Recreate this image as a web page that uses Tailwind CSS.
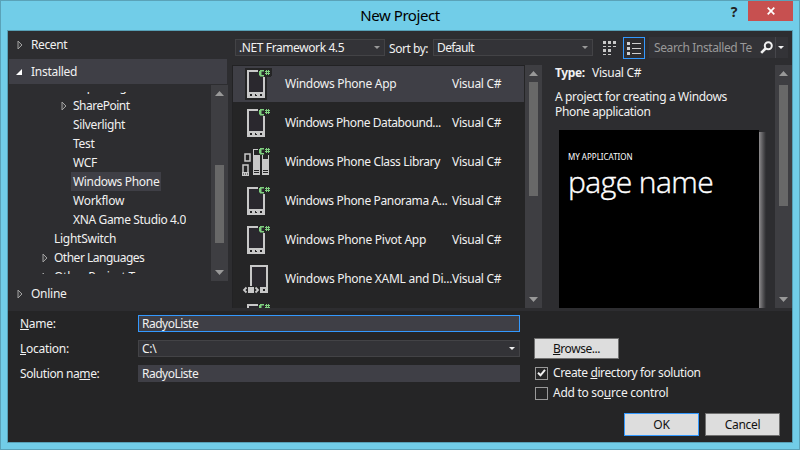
<!DOCTYPE html>
<html lang="en">
<head>
<meta charset="utf-8">
<title>New Project</title>
<script src="https://cdn.jsdelivr.net/npm/@tailwindcss/browser@4"></script>
</head>
<body class="w-[800px] h-[450px] overflow-hidden font-['Noto_Sans','Open_Sans',sans-serif] text-[12px] leading-[16px] text-[#f1f1f1] tracking-[-0.27px] whitespace-nowrap">
<svg class="hidden">
  <defs>
    <symbol id="tri" viewBox="0 0 6 10"><path d="M1 1v8l4-4z" fill="#3a3a3c" stroke="#a0a0a0"/></symbol>
    <symbol id="up" viewBox="0 0 9 5"><path d="M0 5L4.5 0L9 5z" fill="#999"/></symbol>
    <symbol id="down" viewBox="0 0 9 5"><path d="M0 0L4.5 5L9 0z" fill="#999"/></symbol>
    <symbol id="cs" viewBox="0 0 12 8">
      <path d="M1 1h4v1.500H2.500v3.500H5v1.500H1V6.500H0V2h1z" fill="#7fd07f"/>
      <path d="M7 1h1v5h-1zM9 1h1v5h-1zM6 2h5v1h-5zM6 4h5v1h-5z" fill="#7fd07f"/>
    </symbol>
    <symbol id="phone" viewBox="0 0 30 32">
      <path d="M0 0H27V8H22V32H0z" fill="#252526"/>
      <path d="M2 2h18v28H2z" fill="#c8c8c8"/><path d="M4 4h14v20H4z" fill="#2a282e"/>
      <path d="M5 26h2v2H5zM10 26h1v1h1v1h-2zM15 26h2v2h-2z" fill="#252526"/>
      <path d="M13 1h13v8H18v1h-5z" fill="#252526"/><path d="M13 4h5v7h-5z" fill="#2a282e"/>
      <use href="#cs" x="14" y="1" width="12" height="8"/>
    </symbol>
    <symbol id="lib" viewBox="0 0 30 32">
      <path d="M3 8h5v7H3zM1 19h5v10H1z" fill="#252526" stroke="#c8c8c8" stroke-width="1.500"/>
      <path d="M0 26h7v4H0z" fill="#c8c8c8"/><path d="M1 27.500h1v1h-1zM3 27.500h1v1h-1zM5 27.500h1v1h-1z" fill="#252526"/>
      <path d="M11 3h7v26h-7zM20 9h7v20h-7z" fill="#c8c8c8"/>
      <path d="M12 4h6v5h-6zM12 24h5v1h-5zM12 26h5v1h-5zM21 24h5v1h-5zM21 26h5v1h-5zM21 9h5v4h-5z" fill="#252526"/>
      <path d="M16 1h12v8H16z" fill="#252526"/>
      <use href="#cs" x="17" y="1" width="12" height="8"/>
    </symbol>
    <symbol id="xaml" viewBox="0 0 30 32">
      <path d="M8 2h18v28H8z" fill="#c8c8c8"/><path d="M10 4h14v20H10z" fill="#2a282e"/>
      <path d="M0 23h18v8H0z" fill="#252526"/><path d="M21 26h2v2h-2z" fill="#252526"/>
      <path d="M6 24h6v6H6zM18 24h1v6h-1z" fill="#c8c8c8"/>
      <path d="M4.500 24.500L2 27l2.500 2.500M13.500 24.500L16 27l-2.500 2.500" fill="none" stroke="#c8c8c8" stroke-width="1.800"/>
    </symbol>
  </defs>
</svg>
<div class="w-[800px] h-[450px] border border-[#5aa2b8] bg-[#71cde8] flex flex-col">
  <header class="h-[29px] shrink-0 flex items-start text-black relative">
    <h1 class="w-full text-center text-[15px] leading-[28px] tracking-[-0.45px]">New Project</h1>
    <div class="absolute right-[6px] top-0 flex">
      <span class="w-[28px] text-center font-bold text-[14px] leading-[22px] text-[#222]">?</span>
      <span class="w-[45px] h-[20px] bg-[#c75050] flex items-center justify-center">
        <svg class="w-[8px] h-[8px]" viewBox="0 0 8 8"><path d="M.700.700l6.600 6.600M7.300.700L.700 7.300" stroke="#fff" stroke-width="1.700"/></svg>
      </span>
    </div>
  </header>
  <main class="mx-[6px] h-[413px] border border-[#57a0b6] bg-[#252526] flex flex-col">
    <div class="h-[280px] shrink-0 bg-[#2d2d30] flex">
      <nav class="w-[224px] shrink-0 flex flex-col pl-px">
        <div class="h-[28px] flex items-center pl-[8px] gap-[8px]"><svg class="w-[6px] h-[10px]"><use href="#tri"/></svg><span class="tracking-[-0.4px]">Recent</span></div>
        <div class="h-[25px] w-[218px] bg-[#3f3f46] flex items-center pl-[7px] gap-[9px]"><svg class="w-[6px] h-[6px]" viewBox="0 0 6 6"><path d="M6 0v6H0z" fill="#fff"/></svg><span>Installed</span></div>
        <div class="h-[197px] flex justify-between pr-[4px] pt-px">
          <div class="mt-[7px] h-[182px] overflow-hidden">
            <div class="-mt-[15px] flex flex-col leading-[19px]">
              <div class="pl-[64px]">Reporting</div>
              <div class="pl-[52px] flex items-center gap-[6px]"><svg class="w-[6px] h-[10px]"><use href="#tri"/></svg><span class="tracking-[-0.5px]">SharePoint</span></div>
              <div class="pl-[64px] tracking-[-0.35px]">Silverlight</div>
              <div class="pl-[64px]">Test</div>
              <div class="pl-[64px]">WCF</div>
              <div class="pl-[62px] flex"><span class="bg-[#3f3f46] w-[90px] pl-[2px] tracking-[-0.32px]">Windows Phone</span></div>
              <div class="pl-[64px]">Workflow</div>
              <div class="pl-[64px] tracking-[-0.35px]">XNA Game Studio 4.0</div>
              <div class="pl-[45px]">LightSwitch</div>
              <div class="pl-[33px] flex items-center gap-[6px]"><svg class="w-[6px] h-[10px]"><use href="#tri"/></svg><span class="tracking-[-0.5px]">Other Languages</span></div>
              <div class="pl-[33px] flex items-center gap-[6px]"><svg class="w-[6px] h-[10px]"><use href="#tri"/></svg><span>Other Project Types</span></div>
            </div>
          </div>
          <div class="w-[17px] bg-[#3e3e42] flex flex-col items-center py-[6px]">
            <svg class="w-[9px] h-[5px] shrink-0"><use href="#up"/></svg>
            <div class="w-[9px] h-[78px] mt-[69px] bg-[#686868]"></div>
            <svg class="w-[9px] h-[5px] mt-auto shrink-0"><use href="#down"/></svg>
          </div>
        </div>
        <div class="h-[26px] flex items-center pl-[8px] gap-[8px]"><svg class="w-[6px] h-[10px]"><use href="#tri"/></svg><span>Online</span></div>
      </nav>
      <div class="flex-1 flex flex-col">
        <div class="h-[34px] flex items-start pt-[6px] pl-[3px]">
          <div class="mt-[2px] w-[150px] h-[17px] border border-[#434346] bg-[#333337] flex items-center justify-between pl-[3px] pr-[4px]"><span class="tracking-[-0.4px]">.NET Framework 4.5</span><svg class="w-[6px] h-[3px]" viewBox="0 0 6 3"><path d="M0 0h6L3 3z" fill="#999"/></svg></div>
          <span class="ml-[4px] mt-[4px] w-[44px] tracking-[-0.45px]">Sort by:</span>
          <div class="mt-[2px] w-[160px] h-[17px] border border-[#434346] bg-[#333337] flex items-center justify-between pl-[3px] pr-[4px]"><span class="tracking-[-0.6px]">Default</span><svg class="w-[6px] h-[3px]" viewBox="0 0 6 3"><path d="M0 0h6L3 3z" fill="#999"/></svg></div>
          <svg class="ml-[10px] mt-[4px] w-[13px] h-[14px]" viewBox="0 0 13 14"><path d="M0 0h3v3H0zM5 0h3v3H5zM10 0h3v3h-3zM0 8h3v3H0zM5 8h3v3H5zM0 5h3v1H0zM5 5h3v1H5zM10 5h3v1h-3zM0 13h3v1H0zM5 13h3v1H5z" fill="#c8c8c8"/></svg>
          <div class="ml-[7px] w-[22px] h-[22px] border border-[#3399ff] flex items-center justify-center"><svg class="w-[14px] h-[13px]" viewBox="0 0 14 13"><path d="M0 0h3v3H0zM0 5h3v3H0zM0 10h3v3H0zM5 1h9v1H5zM5 6h9v1H5zM5 11h9v1H5z" fill="#d0d0d0"/></svg></div>
          <div class="ml-[4px] w-[139px] h-[21px] bg-[#333337] flex items-center text-[#999]">
            <span class="pl-[5px] w-[112px] tracking-[-0.4px]">Search Installed Te</span>
            <svg class="-ml-[1px] w-[13px] h-[13px]" viewBox="0 0 13 13"><circle cx="8.300" cy="4.700" r="3.500" fill="none" stroke="#f1f1f1" stroke-width="2"/><path d="M5.500 7.500L1.200 11.800" stroke="#f1f1f1" stroke-width="2.600"/></svg>
            <span class="ml-[2px] h-full w-px bg-[#46464b]"></span>
            <svg class="ml-[2px] w-[6px] h-[3px]" viewBox="0 0 6 3"><path d="M0 0h6L3 3z" fill="#f1f1f1"/></svg>
          </div>
        </div>
        <div class="h-[243px] flex">
          <div class="w-[293px] bg-[#252526] border-l border-t border-[#222224] overflow-hidden">
            <div class="h-[36px] w-[291px] bg-[#3f3f46] flex items-center"><svg class="ml-[12px] w-[30px] h-[32px] shrink-0"><use href="#phone"/></svg><span class="ml-[10px] w-[167px]">Windows Phone App</span><span>Visual C#</span></div>
            <div class="mt-[3px] h-[36px] flex items-center"><svg class="ml-[12px] w-[30px] h-[32px] shrink-0"><use href="#phone"/></svg><span class="ml-[10px] w-[167px] tracking-[-0.42px]">Windows Phone Databound...</span><span>Visual C#</span></div>
            <div class="mt-[3px] h-[36px] flex items-center"><svg class="ml-[9px] w-[30px] h-[32px] shrink-0"><use href="#lib"/></svg><span class="ml-[13px] w-[167px] tracking-[-0.37px]">Windows Phone Class Library</span><span>Visual C#</span></div>
            <div class="mt-[3px] h-[36px] flex items-center"><svg class="ml-[12px] w-[30px] h-[32px] shrink-0"><use href="#phone"/></svg><span class="ml-[10px] w-[167px] tracking-[-0.36px]">Windows Phone Panorama A...</span><span>Visual C#</span></div>
            <div class="mt-[3px] h-[36px] flex items-center"><svg class="ml-[12px] w-[30px] h-[32px] shrink-0"><use href="#phone"/></svg><span class="ml-[10px] w-[167px]">Windows Phone Pivot App</span><span>Visual C#</span></div>
            <div class="mt-[3px] h-[36px] flex items-center"><svg class="ml-[9px] w-[30px] h-[32px] shrink-0"><use href="#xaml"/></svg><span class="ml-[13px] w-[167px]">Windows Phone XAML and Di...</span><span>Visual C#</span></div>
            <div class="mt-[3px] h-[36px] flex items-center"><svg class="ml-[12px] w-[30px] h-[32px] shrink-0"><use href="#phone"/></svg></div>
          </div>
          <div class="w-[17px] bg-[#3e3e42] flex flex-col items-center py-[6px]">
            <svg class="w-[9px] h-[5px] shrink-0"><use href="#up"/></svg>
            <div class="w-[9px] h-[114px] mt-[6px] bg-[#686868]"></div>
            <svg class="w-[9px] h-[5px] mt-auto shrink-0"><use href="#down"/></svg>
          </div>
          <div class="flex-1 pl-[13px]">
            <div class="flex"><b class="w-[37px] font-bold tracking-[-0.4px]">Type:</b><span>Visual C#</span></div>
            <p class="mt-[8px] leading-[15px] tracking-[-0.35px]">A project for creating a Windows<br>Phone application</p>
            <div class="ml-[4px] mt-[11px] flex h-[178px]">
              <div class="w-[200px] bg-black text-white pl-[9px] pt-[20px]">
                <div class="text-[8px] leading-[13px] tracking-[0px]">MY APPLICATION</div>
                <div class="font-['Open_Sans'] font-light text-[30px] leading-[37px] tracking-[-0.55px] [-webkit-text-stroke:0.4px_white]">page name</div>
              </div>
              <div class="w-[7px] mt-[2px] bg-linear-to-r from-[#8f8d8f] to-[#2d2d30]"></div>
            </div>
          </div>
          <div class="w-[17px] bg-[#3e3e42] flex flex-col items-center py-[6px]">
            <svg class="w-[9px] h-[5px] shrink-0"><use href="#up"/></svg>
            <div class="w-[9px] h-[121px] mt-[9px] bg-[#686868]"></div>
            <svg class="w-[9px] h-[5px] mt-auto shrink-0"><use href="#down"/></svg>
          </div>
        </div>
      </div>
    </div>
    <div class="flex-1 flex pt-[4px]">
      <div class="w-[526px] pl-[12px]">
        <div class="flex h-[25px]"><span class="w-[118px] leading-[18px]"><u>N</u>ame:</span><div class="w-[382px] h-[17px] border border-[#3399ff] bg-[#3f3f46] pl-[3px] leading-[15px] tracking-[-0.5px]">RadyoListe</div></div>
        <div class="flex h-[25px]"><span class="w-[118px] leading-[18px]"><u>L</u>ocation:</span><div class="w-[382px] h-[17px] border border-[#434346] bg-[#333337] pl-[3px] pr-[4px] leading-[15px] flex items-center justify-between"><span>C:\</span><svg class="w-[6px] h-[3px]" viewBox="0 0 6 3"><path d="M0 0h6L3 3z" fill="#f1f1f1"/></svg></div></div>
        <div class="flex h-[25px]"><span class="w-[118px] leading-[18px] tracking-[-0.4px]">Solution na<u>m</u>e:</span><div class="w-[382px] h-[17px] bg-[#3f3f46] pl-[4px] leading-[17px] tracking-[-0.5px]">RadyoListe</div></div>
      </div>
      <div class="w-[246px] pt-[23px]">
        <div class="w-[85px] h-[21px] border border-[#707070] bg-[#dddddd] text-[#111] flex items-center justify-center"><span class="tracking-[-0.45px]"><u>B</u>rowse...</span></div>
        <div class="mt-[6px] ml-px flex items-center h-[16px] gap-[5px]"><span class="w-[13px] h-[13px] border border-[#999] flex items-center justify-center"><svg class="w-[9px] h-[8px]" viewBox="0 0 9 8"><path d="M1 3.800L3.500 6.300L8 .800" fill="none" stroke="#f1f1f1" stroke-width="2"/></svg></span><span class="tracking-[-0.38px]">Create <u>d</u>irectory for solution</span></div>
        <div class="mt-[4px] ml-px flex items-center h-[16px] gap-[5px]"><span class="w-[13px] h-[13px] border border-[#999]"></span><span>Add to so<u>u</u>rce control</span></div>
        <div class="mt-[12px] flex justify-end gap-[6px] text-[#111]">
          <div class="w-[75px] h-[23px] border border-[#3399ff] bg-[#dddddd] flex items-center justify-center">OK</div>
          <div class="w-[75px] h-[23px] border border-[#707070] bg-[#dddddd] flex items-center justify-center">Cancel</div>
        </div>
      </div>
    </div>
  </main>
</div>
</body>
</html>
